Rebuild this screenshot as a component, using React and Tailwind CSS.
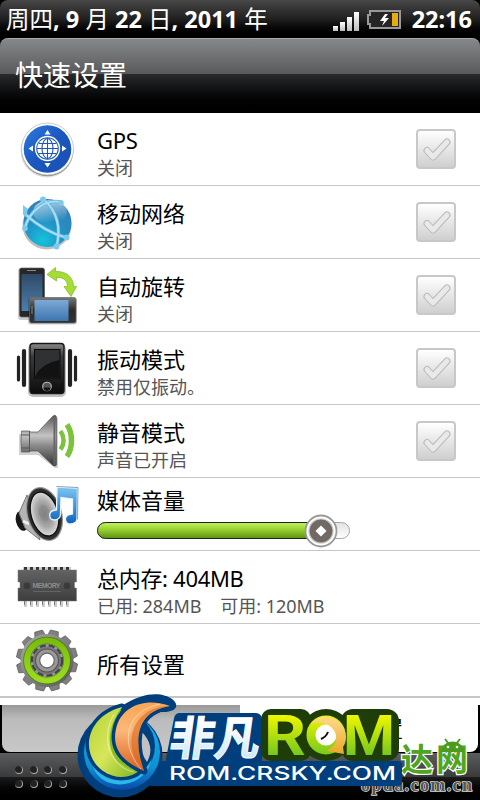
function GpsIcon() {
  return (
    <svg className="h-[73px] w-[97px]" viewBox="0 0 97 73">
      <defs>
        <linearGradient id="gps" x1="0" y1="0" x2="1" y2="1">
          <stop offset="0" stopColor="#2f7be0" />
          <stop offset=".5" stopColor="#1a57bd" />
          <stop offset="1" stopColor="#1b50b0" />
        </linearGradient>
      </defs>
      <circle cx="47" cy="38" r="26.5" fill="#000" opacity=".12" />
      <circle cx="47.5" cy="37.5" r="25.8" fill="#555" opacity=".6" />
      <circle cx="47.5" cy="36" r="26" fill="#fff" stroke="#bbb" strokeWidth=".8" />
      <circle cx="47.5" cy="36" r="23.8" fill="url(#gps)" />
      <circle cx="47.5" cy="35.5" r="12" fill="none" stroke="#fff" strokeWidth="1.4" />
      <circle cx="47.5" cy="35.5" r="10.3" fill="#fff" />
      <g fill="none" stroke="#1a57bd" strokeWidth="1.1">
        <path d="M47.5 25v21M37 35.5h21M39 30.5h17M39 40.5h17" />
        <ellipse cx="47.5" cy="35.5" rx="5.5" ry="10" />
      </g>
      <path d="M47.5 17l3 4.500h-6zM47.500 54.500l3-4.500h-6zM28.500 35.500l4.500-3v6zM66.500 35.500l-4.500-3v6z" fill="#fff" />
    </svg>
  );
}

function NetworkIcon() {
  return (
    <svg className="h-[73px] w-[97px]" viewBox="0 0 97 73">
      <defs>
        <radialGradient id="globe" cx=".4" cy=".85" r=".95">
          <stop offset="0" stopColor="#14c3dc" />
          <stop offset=".4" stopColor="#2094c6" />
          <stop offset="1" stopColor="#3a78b4" />
        </radialGradient>
        <linearGradient id="globeShine" x1="0" y1="0" x2=".3" y2="1">
          <stop offset="0" stopColor="#fff" stopOpacity=".7" />
          <stop offset="1" stopColor="#fff" stopOpacity="0" />
        </linearGradient>
      </defs>
      <ellipse cx="47" cy="39.500" rx="24.500" ry="24" fill="#000" opacity=".25" />
      <circle cx="47.500" cy="37" r="24" fill="url(#globe)" />
      <ellipse cx="50" cy="26" rx="17" ry="12" fill="url(#globeShine)" />
      <g fill="none" strokeLinecap="round" stroke="#5ab4dc" strokeWidth="3.600">
        <path d="M25 28C37 39 52 48 66 51.500" />
        <path d="M43 13C58 25 61 43 56.500 61" />
        <path d="M24.500 43C29 25 45 13 61 16" />
      </g>
      <g fill="none" strokeLinecap="round" stroke="#a8def5" strokeWidth="2.200">
        <path d="M25 28C37 39 52 48 66 51.500" />
        <path d="M43 13C58 25 61 43 56.500 61" />
        <path d="M24.500 43C29 25 45 13 61 16" />
      </g>
      <g fill="#7ccbea">
        <path d="M23 19l5 4-2 8-3-3z" />
        <circle cx="66.500" cy="51.500" r="3" />
        <circle cx="43" cy="13.500" r="3" />
        <circle cx="56.500" cy="60.500" r="3" />
        <circle cx="25" cy="42.500" r="2.800" />
        <circle cx="61" cy="17" r="2.800" />
      </g>
    </svg>
  );
}

function RotateIcon() {
  return (
    <svg className="h-[73px] w-[97px]" viewBox="0 0 97 73">
      <defs>
        <linearGradient id="scr" x1="0" y1="0" x2="0" y2="1">
          <stop offset="0" stopColor="#2f4a66" />
          <stop offset="1" stopColor="#4d7fae" />
        </linearGradient>
        <linearGradient id="scr2" x1="0" y1="0" x2="0" y2="1">
          <stop offset="0" stopColor="#7da9d6" />
          <stop offset="1" stopColor="#3d75b0" />
        </linearGradient>
        <linearGradient id="body2" x1="0" y1="0" x2="0" y2="1">
          <stop offset="0" stopColor="#777" />
          <stop offset=".5" stopColor="#2c2c2c" />
          <stop offset="1" stopColor="#333" />
        </linearGradient>
      </defs>
      <rect x="18" y="9" width="27" height="52" rx="3" fill="#000" opacity=".2" />
      <rect x="19.500" y="9" width="25" height="49" rx="2" fill="#252729" stroke="#666" strokeWidth=".7" />
      <rect x="21.500" y="15" width="21" height="37" fill="url(#scr)" />
      <path d="M27 11.500h9" stroke="#888" />
      <rect x="28" y="39" width="49" height="26.500" rx="2" fill="#000" opacity=".2" />
      <rect x="29.500" y="38.500" width="46.500" height="25.500" rx="2" fill="url(#body2)" stroke="#666" strokeWidth=".7" />
      <rect x="34.500" y="41" width="34" height="21" fill="url(#scr2)" />
      <path d="M32 47v8" stroke="#888" />
      <path d="M47 15.500l8.500-7v4C67 12 73.500 19 73.500 27.500h3L71 37.500l-7-10h3.500c0-6-4-9.500-11-9V22z" fill="#a5dc35" stroke="#86bd28" strokeWidth=".8" />
    </svg>
  );
}

function VibrateIcon() {
  return (
    <svg className="h-[73px] w-[97px]" viewBox="0 0 97 73">
      <defs>
        <linearGradient id="vb" x1="0" y1="0" x2="0" y2="1">
          <stop offset="0" stopColor="#8a8a8a" />
          <stop offset=".25" stopColor="#3c3c3c" />
          <stop offset="1" stopColor="#0b0b0b" />
        </linearGradient>
      </defs>
      <rect x="28" y="12" width="38" height="53" rx="5" fill="#000" opacity=".25" />
      <rect x="30" y="11.500" width="34" height="50" rx="3" fill="url(#vb)" stroke="#171717" strokeWidth="1.400" />
      <rect x="34.500" y="17.500" width="25.500" height="28.500" fill="#303132" stroke="#080808" />
      <path d="M35 45.500C38 35 50 30 59.500 28v17.500z" fill="#121212" />
      <circle cx="47" cy="54.500" r="4.300" fill="#555" stroke="#bbb" strokeWidth="1.100" />
      <path d="M43.500 55.500a3.500 3.500 0 0 0 7 0z" fill="#161616" />
      <g stroke="#222" strokeLinecap="round">
        <path d="M24 19v34M70 19v34" strokeWidth="4.200" />
        <path d="M18.500 25v23M75.500 25v23" strokeWidth="3.200" />
      </g>
    </svg>
  );
}

function SilentIcon() {
  return (
    <svg className="h-[73px] w-[97px]" viewBox="0 0 97 73">
      <defs>
        <linearGradient id="horn" x1="0" y1="0" x2="0" y2="1">
          <stop offset="0" stopColor="#555" />
          <stop offset=".4" stopColor="#c4c4c4" />
          <stop offset=".6" stopColor="#8a8a8a" />
          <stop offset="1" stopColor="#333" />
        </linearGradient>
      </defs>
      <path d="M19 29h19l17-16h3v50h-3L38 50H19z" fill="#000" opacity=".18" />
      <path d="M21.500 26h8l1 1h7.500L53 11q3.500-2 3.500 2v46q0 3-3.500 1.500L38 46h-7.500l-1 1h-8q-1-10 0-21z" fill="url(#horn)" stroke="#555" strokeWidth=".7" />
      <path d="M54.500 12v48" stroke="#666" strokeWidth="2" />
      <path d="M29.500 26v21M21.500 30h8M21.500 43h8" stroke="#555" />
      <g fill="none" stroke="#7cc23a">
        <path d="M60.500 26c4 6 4 13 0 18.500" strokeWidth="4.500" />
        <path d="M67 19.500c6 9 6 23 0 32" strokeWidth="5.500" />
      </g>
    </svg>
  );
}

function MediaIcon() {
  return (
    <svg className="h-[73px] w-[97px]" viewBox="0 0 97 73">
      <defs>
        <radialGradient id="cone">
          <stop offset="0" stopColor="#777" />
          <stop offset=".6" stopColor="#aaa" />
          <stop offset="1" stopColor="#ddd" />
        </radialGradient>
        <linearGradient id="note" x1="0" y1="0" x2="0" y2="1">
          <stop offset="0" stopColor="#7cc6f3" />
          <stop offset="1" stopColor="#0c63bb" />
        </linearGradient>
      </defs>
      <ellipse cx="22" cy="43" rx="6" ry="10" fill="#181818" transform="rotate(-15 22 43)" />
      <path d="M27 17L19 35l6 15 15 12z" fill="#b5b5b5" stroke="#777" />
      <path d="M23 43l6 3" stroke="#eee" strokeWidth="3" />
      <ellipse cx="44.500" cy="36" rx="17" ry="27" fill="#303030" stroke="#999" strokeWidth="1.200" transform="rotate(-16 44.500 36)" />
      <ellipse cx="44.500" cy="36" rx="13.500" ry="22.500" fill="url(#cone)" stroke="#111" strokeWidth="1.500" transform="rotate(-16 44.500 36)" />
      <ellipse cx="44" cy="35" rx="5" ry="8" fill="#888" opacity=".6" transform="rotate(-16 44 35)" />
      <path d="M57 9l20.500 1-.5 31c0 3-3 5-6.500 5-6 0-7-8-1-9.500l3-.5V21l-11.500-1.500-.5 17c0 3.500-3 5.500-6 5.500-6 0-6.500-8-1-9.500l3-.5z" fill="url(#note)" stroke="#eef5fb" strokeWidth="1.300" />
      <path d="M56.500 8.500l21.500 1-.5 32" fill="none" stroke="#677b8e" strokeWidth=".7" />
    </svg>
  );
}

function MemoryIcon() {
  return (
    <svg className="h-[73px] w-[97px]" viewBox="0 0 97 73">
      <defs>
        <linearGradient id="chip" x1="0" y1="0" x2="0" y2="1">
          <stop offset="0" stopColor="#626262" />
          <stop offset="1" stopColor="#3e3e3e" />
        </linearGradient>
      </defs>
      <path d="M23 17.500h48" stroke="#ccc" strokeWidth="3" />
      <path d="M25.500 16v4M31.500 16v4M37.500 16v4M43.500 16v4M49.500 16v4M55.500 16v4M61.500 16v4M67.500 16v4" stroke="#333" strokeWidth="3" />
      <path d="M25.500 49v7M31.500 49v7M37.500 49v7M43.500 49v7M49.500 49v7M55.500 49v7M61.500 49v7M67.500 49v7" stroke="#ccc" strokeWidth="3" />
      <path d="M24.500 49v5M30.500 49v5M36.500 49v5M42.500 49v5M48.500 49v5M54.500 49v5M60.500 49v5M66.500 49v5" stroke="#777" />
      <path d="M18 19h58.500v12h-2v6h2v13H18V37h2v-6h-2z" fill="url(#chip)" stroke="#777" strokeWidth=".5" />
      <circle cx="27" cy="35" r="4" fill="#3b3b3b" stroke="#505050" />
      <circle cx="67" cy="35" r="4" fill="#3b3b3b" stroke="#505050" />
      <text x="32.500" y="37" textLength="28" fontSize="7" fontWeight="700" fontFamily="Liberation Sans, sans-serif" fill="#8c8c8c">MEMORY</text>
      <path d="M33 40.500h28" stroke="#777" strokeWidth=".6" />
    </svg>
  );
}

const teeth = [0, 30, 60, 90, 120, 150, 180, 210, 240, 270, 300, 330];

function GearIcon() {
  return (
    <svg className="h-[73px] w-[97px]" viewBox="0 0 97 73">
      <defs>
        <linearGradient id="gear" x1="0" y1="0" x2="1" y2="1">
          <stop offset="0" stopColor="#aaa" />
          <stop offset="1" stopColor="#555" />
        </linearGradient>
        <linearGradient id="ring" x1="0" y1="0" x2="0" y2="1">
          <stop offset="0" stopColor="#79bd0c" />
          <stop offset="1" stopColor="#9bdc20" />
        </linearGradient>
      </defs>
      <g fill="#808080" stroke="#5c5c5c" strokeWidth=".7">
        {teeth.map((a) => (
          <path key={a} d="M41.500 12l1.500-6h8l1.500 6z" transform={`rotate(${a + 14} 47 36.500)`} />
        ))}
      </g>
      <circle cx="47" cy="36.500" r="26.500" fill="url(#gear)" />
      <circle cx="47" cy="36.500" r="20" fill="none" stroke="#4e7e0a" strokeWidth="7.500" />
      <circle cx="47" cy="36.500" r="20" fill="none" stroke="url(#ring)" strokeWidth="6" />
      <circle cx="47" cy="36.500" r="16.500" fill="#999" />
      <circle cx="47" cy="36.500" r="15" fill="none" stroke="#444" strokeWidth="2.500" strokeDasharray="6 3" />
      <circle cx="47" cy="36.500" r="14" fill="#777" />
      <circle cx="47" cy="36.500" r="11.500" fill="#999" stroke="#555" strokeWidth="1.200" />
      <circle cx="47" cy="36.500" r="7.300" fill="#fff" stroke="#666" strokeWidth="1.200" />
    </svg>
  );
}

function CheckBox() {
  return (
    <div className="mr-6 flex h-10 w-10 shrink-0 items-center justify-center rounded border-2 border-[#c8c8c8] bg-linear-to-b from-white to-[#cfcfcf]">
      <svg className="h-8 w-8" viewBox="0 0 32 32">
        <path d="M7 17.500l6 6.500L27 9" fill="none" stroke="#b9b9b9" strokeWidth="7" strokeLinecap="round" strokeLinejoin="round" />
        <path d="M7 17.500l6 6.500L27 9" fill="none" stroke="#e9e9e9" strokeWidth="5" strokeLinecap="round" strokeLinejoin="round" />
      </svg>
    </div>
  );
}

function Slider() {
  return (
    <div className="relative mt-2 h-[17px] w-[253px] rounded-full border border-[#a5a5a5] bg-linear-to-b from-[#e2e2e2] to-white">
      <div className="-mt-px -ml-px h-[17px] w-[226px] rounded-l-full border border-[#222] bg-linear-to-b from-[#b8ec52] from-10% via-[#92cb2b] via-50% to-[#5f9414]" />
      <svg className="absolute -top-[9px] left-[206px] h-[34px] w-[34px]" viewBox="0 0 34 34">
        <circle cx="17" cy="17" r="15.500" fill="#fff" stroke="#999" strokeWidth="1.800" />
        <circle cx="17" cy="17" r="12" fill="#716964" stroke="#c8c4c2" strokeWidth="1.200" />
        <path d="M17 11.500l5.500 5.500-5.500 5.500-5.500-5.500z" fill="#fff" />
      </svg>
    </div>
  );
}

const rows = [
  { title: "GPS", sub: "关闭", icon: GpsIcon, check: true },
  { title: "移动网络", sub: "关闭", icon: NetworkIcon, check: true },
  { title: "自动旋转", sub: "关闭", icon: RotateIcon, check: true },
  { title: "振动模式", sub: "禁用仅振动。", icon: VibrateIcon, check: true },
  { title: "静音模式", sub: "声音已开启", icon: SilentIcon, check: true },
  { title: "媒体音量", icon: MediaIcon, slider: true },
  { title: "总内存: 404MB", sub: "已用: 284MB\u00a0\u00a0\u00a0 可用: 120MB", icon: MemoryIcon },
  { title: "所有设置", icon: GearIcon },
];

function Row({ row }) {
  const Icon = row.icon;
  const latin = /[A-Z]/.test(row.title);
  return (
    <div className="flex h-[73px] items-center border-b border-[#c6c6c6]">
      <Icon />
      <div className={row.slider ? "flex-1 pb-1" : "flex-1 pt-[7px]"}>
        <p className={latin ? "text-[22px] leading-7 tracking-[-0.3px]" : "text-[22px] leading-7"}>{row.title}</p>
        {row.sub && <p className="pt-0.5 text-lg leading-[24px] text-[#555]">{row.sub}</p>}
        {row.slider && <Slider />}
      </div>
      {row.check && <CheckBox />}
    </div>
  );
}

function StatusBar() {
  return (
    <div className="flex h-[38px] items-center rounded-t-lg bg-linear-to-b from-[#484848] via-[#202020] via-50% to-black pr-2 pl-1.5 text-[23.500px] text-white">
      <p className="flex-1 pt-0.5 whitespace-nowrap">
        周四<b>, 9 </b>月<b> 22 </b>日<b>, 2011 </b>年
      </p>
      <svg className="h-[38px] w-[79px]" viewBox="0 0 79 38">
        <defs>
          <linearGradient id="bars" x1="0" y1="0" x2="0" y2="1">
            <stop offset="0" stopColor="#fff" />
            <stop offset="1" stopColor="#bbb" />
          </linearGradient>
        </defs>
        <g fill="url(#bars)">
          <rect x="1" y="26" width="5" height="5" />
          <rect x="8" y="22" width="5" height="9" />
          <rect x="15" y="17" width="5" height="14" />
          <rect x="22" y="12" width="5" height="19" />
        </g>
        <path d="M38 11h30v17H38v-4h-2v-9h2z" fill="#252525" stroke="#999" strokeWidth="2" />
        <path d="M53 14l-5 7h4l-2 5 7-8h-4l3-4z" fill="#fff" />
        <rect x="60" y="13" width="6" height="13" fill="#e5ac14" />
      </svg>
      <b className="w-[61px] pt-0.5 text-right">22:16</b>
    </div>
  );
}

function Watermark() {
  return (
    <svg className="absolute bottom-0 left-0 h-[110px] w-[480px]" viewBox="0 690 480 110">
      <defs>
        <linearGradient id="cy" x1="0" y1="0" x2="0" y2="1">
          <stop offset="0" stopColor="#17b4ec" />
          <stop offset=".7" stopColor="#0e90d2" />
          <stop offset="1" stopColor="#0a4bab" />
        </linearGradient>
        <linearGradient id="gn" x1="0" y1="0" x2="1" y2="1">
          <stop offset="0" stopColor="#b3d335" />
          <stop offset=".5" stopColor="#d7e65b" />
          <stop offset="1" stopColor="#79b51c" />
        </linearGradient>
        <linearGradient id="og" x1="0" y1="0" x2="0" y2="1">
          <stop offset="0" stopColor="#f9a552" />
          <stop offset=".4" stopColor="#fcb878" />
          <stop offset="1" stopColor="#d8601c" />
        </linearGradient>
        <linearGradient id="rom" gradientUnits="userSpaceOnUse" x1="0" y1="714" x2="0" y2="757">
          <stop offset="0" stopColor="#f4f800" />
          <stop offset="1" stopColor="#6fc51e" />
        </linearGradient>
        <linearGradient id="fei" x1="0" y1="0" x2="0" y2="1">
          <stop offset=".3" stopColor="#fff" />
          <stop offset="1" stopColor="#bde2f7" />
        </linearGradient>
        <linearGradient id="qo" x1="0" y1="0" x2="0" y2="1">
          <stop offset="0" stopColor="#ffd98b" />
          <stop offset="1" stopColor="#e9a928" />
        </linearGradient>
      </defs>

      <text x="401" y="771" fontSize="32" textLength="67" fontFamily="Noto Sans CJK SC, sans-serif" fontWeight="700" fill="#4fa51d" stroke="#fff" strokeWidth="2.500" paintOrder="stroke">达网</text>
      <g fill="#4b9b1d">
        <path d="M441 752c1-14 22-14 23 0z" />
        <path d="M445 739l4 5M460 739l-4 5" stroke="#4b9b1d" strokeWidth="2" />
      </g>
      <circle cx="448" cy="747" r="1.300" fill="#fff" />
      <circle cx="457" cy="747" r="1.300" fill="#fff" />
      <text x="361" y="791" fontSize="18" textLength="111" fontFamily="Liberation Serif, serif" fontWeight="700" fill="#555" stroke="#ddd" strokeWidth="1.500" paintOrder="stroke">opda.com.cn</text>

      <g fill="#003f7e" stroke="#003f7e" strokeLinejoin="round">
        <path d="M160 765h238v17H152z" strokeWidth="8" />
        <path d="M180 719h76v40h-84z" strokeWidth="12" />
      </g>
      <path d="M122 706C145 690 164 693 172 699C180 705 177 713 160 712L135 725z" fill="#003f7e" />
      <circle cx="120" cy="755" r="42.500" fill="#003f7e" />
      <circle cx="122" cy="752" r="38" fill="url(#cy)" />
      <circle cx="121" cy="746" r="34" fill="#003f7e" />
      <path d="M92 762C98 782 138 790 152 758C145 793 96 792 92 762z" fill="#29b9ea" />
      <path d="M141 731C151 741 153 751 147 762C140 752 138 742 141 731z" fill="#c2c2c2" />
      <path d="M122 707C86 716 79 754 103 771C117 781 133 777 140 770C116 770 101 739 122 707z" fill="url(#gn)" stroke="#003f7e" strokeWidth="7" strokeLinejoin="round" paintOrder="stroke" />
      <path d="M122 707C98 739 112 770 140 770C122 766 110 738 122 707z" fill="#86bd1e" />
      <path d="M170 706C147 697 121 705 116 729C111 751 126 763 144 771C132 737 138 711 170 706z" fill="url(#og)" stroke="#003f7e" strokeWidth="7" strokeLinejoin="round" paintOrder="stroke" />
      <path d="M170 706C133 706 119 745 144 771C132 737 138 711 170 706z" fill="#d9691f" opacity=".6" />
      <path d="M114 714C99 740 112 768 134 772M160 704C120 713 123 749 141 769" fill="none" stroke="#fff" strokeOpacity=".6" strokeWidth=".8" />

      <g transform="translate(107 0) skewX(-8)">
        <text x="167" y="755" textLength="90" lengthAdjust="spacingAndGlyphs" fontSize="46" fontFamily="Noto Sans CJK SC, sans-serif" fontWeight="700" fill="url(#fei)" stroke="#fff">非凡</text>
      </g>
      <g fill="#1f3d09">
        <rect x="261" y="709" width="50" height="52" rx="10" />
        <rect x="341" y="709" width="58" height="52" rx="12" />
        <circle cx="326" cy="735" r="26" />
      </g>
      <g fontFamily="Roboto, sans-serif" fontSize="56" fontWeight="700" fill="url(#rom)">
        <text x="264" y="755" textLength="42" lengthAdjust="spacingAndGlyphs">R</text>
        <text x="343" y="755" textLength="52" lengthAdjust="spacingAndGlyphs">M</text>
      </g>
      <circle cx="326" cy="735" r="15" fill="#fff" stroke="url(#rom)" strokeWidth="9" />
      <path d="M311 723C324 710 346 720 346 737q0 6-3 10l1 7-17-3 5-4 3-3C340 731 329 720 311 723z" fill="url(#qo)" />
      <path d="M321 739q5-2 7-7" fill="none" stroke="#111" strokeWidth="2" />
      <text x="169" y="779.500" fontSize="18" textLength="227" lengthAdjust="spacingAndGlyphs" fontFamily="Inter, sans-serif" fontWeight="500" fill="#fff">ROM.CRSKY.COM</text>
    </svg>
  );
}

function Grip() {
  return (
    <div className="grid grid-cols-4 gap-x-[6.5px] gap-y-1.5">
      {[...Array(8)].map((_, i) => (
        <span key={i} className="h-2 w-2 rounded-full border-r border-b border-[#aaa] bg-[#222]" />
      ))}
    </div>
  );
}

export default function App() {
  return (
    <div className="relative h-[800px] w-[480px] overflow-hidden bg-black font-['Noto_Sans','Noto_Sans_CJK_SC',sans-serif] text-black">
      <StatusBar />
      <header className="h-[75px] overflow-hidden rounded-t-lg border-t border-[#aaa] bg-linear-to-b from-[#85888a] to-[#58595b] to-48% pt-[35px] text-[28px] text-white">
        <div className="flex h-10 items-start bg-linear-to-b from-[#2a2b2d] to-black pl-[15px]">
          <h1 className="-mt-[19px] leading-10">快速设置</h1>
        </div>
      </header>
      <main className="bg-white">
        {rows.map((row) => (
          <Row key={row.title} row={row} />
        ))}
      </main>
      <div className="h-2 border-t border-[#c6c6c6] bg-white" />
      <div className="flex h-[47px] px-0.5">
        <div className="w-[238px] rounded-bl-lg bg-linear-to-b from-[#999] via-[#bbb] via-30% to-[#c8c8c8]" />
        <div className="flex flex-1 items-center justify-center rounded-br-lg bg-white text-[22px]">个人设置</div>
      </div>
      <footer className="mt-px flex h-[47px] flex-col bg-linear-to-b from-[#5b5d5f] via-[#3a3b3c] via-50% to-[#3a3b3c]">
        <div className="mt-6 h-6 bg-linear-to-b from-[#1c1c1c] to-black">
          <div className="-mt-[11px] flex pl-[15px]">
            <Grip />
          </div>
        </div>
      </footer>
      <Watermark />
    </div>
  );
}
